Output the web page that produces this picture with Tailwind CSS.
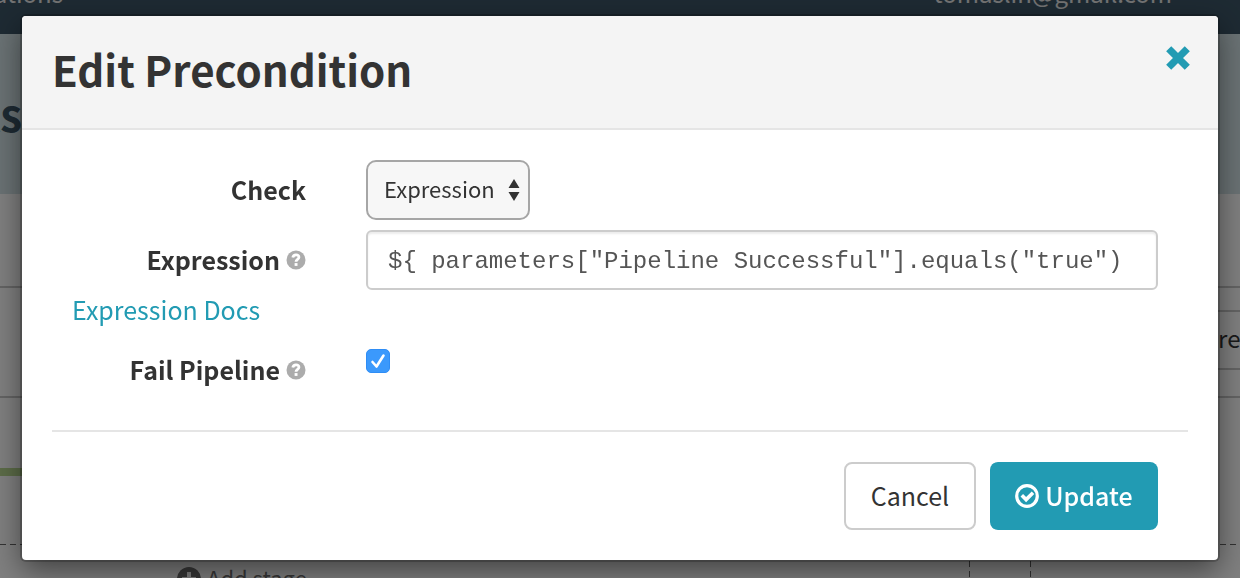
<!DOCTYPE html>
<html lang="en">
<head>
<meta charset="utf-8">
<meta name="viewport" content="width=device-width, initial-scale=1">
<title>Edit Precondition</title>
<script src="https://cdn.jsdelivr.net/npm/@tailwindcss/browser@4"></script>
</head>
<body class="h-screen overflow-hidden bg-white font-['Noto_Sans_CJK_SC','Noto_Sans',sans-serif] text-[#333333]">

<!-- Page behind the dialog -->
<div class="h-screen overflow-hidden" inert>
  <nav class="flex h-[34px] items-start justify-between overflow-hidden bg-[#3c5566] pr-[68px] text-[24px] leading-[34px] text-[#e6e6e6]">
    <span class="-mt-[24px] -ml-[76px]">Applications</span>
    <span class="-mt-[24px]">tomaslin@gmail.com</span>
  </nav>
  <header class="flex h-[160px] items-center bg-[#d4e4e8]">
    <h1 class="flex w-[22px] justify-end pb-[2px] text-[44px] leading-[60px] font-bold text-[#3c5566]">clients</h1>
  </header>
  <div class="mt-[92px] flex h-[112px] items-start justify-end overflow-hidden border-y-2 border-[#c8c8c8] pt-[22px]">
    <div class="-mr-[80px] flex h-[60px] w-[150px] items-center justify-center border-2 border-[#c8c8c8] pr-[12px] pb-1 text-[24px] text-[#333333]">Create</div>
  </div>
  <div class="mt-[70px] h-2 w-1/2 bg-[#b8d890]"></div>
  <div class="mt-[68px] h-px bg-[repeating-linear-gradient(90deg,#666666_0_6px,transparent_6px_10px)]"></div>
  <div class="flex h-10 justify-between pt-4">
    <div class="flex gap-[6px] pl-[177px] text-[22px] leading-8 text-[#707070]">
      <svg class="mt-[6px] size-6" viewBox="0 0 24 24" aria-hidden="true"><circle cx="12" cy="12" r="12" fill="currentColor"/><path d="M12 5v14M5 12h14" stroke="#fff" stroke-width="4"/></svg>
      Add stage
    </div>
    <div class="mr-[209px] flex w-[62px] justify-between">
      <div class="w-px bg-[repeating-linear-gradient(180deg,#666666_0_6px,transparent_6px_10px)]"></div>
      <div class="w-px bg-[repeating-linear-gradient(180deg,#666666_0_6px,transparent_6px_10px)]"></div>
    </div>
  </div>
</div>

<!-- Dialog -->
<div class="fixed inset-0 bg-black/50 px-[22px] pt-4">
  <section role="dialog" aria-modal="true" aria-labelledby="dialog-title" class="overflow-hidden rounded-sm bg-white shadow-[0_10px_30px_rgba(0,0,0,0.5),0_0_0_2px_rgba(0,0,0,0.2)]">
    <header class="flex items-start justify-between border-b-2 border-[#e5e5e5] bg-[#f4f4f4] px-[30px]">
      <h2 id="dialog-title" class="pb-[6px] text-[42px] leading-[106px] font-bold">Edit Precondition</h2>
      <button type="button" aria-label="Close" class="-mr-[2px] mt-[30px] text-[#229bb3]">
        <svg class="size-6" viewBox="0 0 24 24" fill="none" stroke="currentColor" stroke-width="7.2" aria-hidden="true"><path d="M2.7 2.7l18.6 18.6M21.3 2.7L2.7 21.3"/></svg>
      </button>
    </header>

    <form class="px-[30px] py-[30px]">
      <div class="grid grid-cols-[254px_1fr] gap-x-[60px] pr-[30px] pb-[30px]">
        <label for="check" class="pb-[2px] text-right text-[25px] leading-[58px] font-bold">Check</label>
        <div class="relative w-[164px]">
          <select id="check" class="h-[60px] w-full appearance-none rounded-[10px] border-2 border-[#a6a6a6] bg-[#f7f7f7] pb-1 pl-4 text-[22px]">
            <option>Expression</option>
          </select>
          <svg class="pointer-events-none absolute top-[19px] right-[10px] h-[22px] w-3" viewBox="0 0 12 22" fill="#333" aria-hidden="true"><path d="M6 0l5.500 9H.5zM6 22L.5 13h11z"/></svg>
        </div>

        <div class="mt-[10px] flex items-center justify-end gap-[6px]">
          <label for="expression" class="pb-[2px] text-[25px] leading-[58px] font-bold">Expression</label>
          <svg class="size-5" viewBox="0 0 20 20" aria-hidden="true"><circle cx="10" cy="10" r="9.500" fill="#acacac"/><path d="M6.800 7.500C7.500 3.700 13.200 4.200 12.900 7.400C12.700 9.400 10 9.300 10 11.700" fill="none" stroke="#fff" stroke-width="2.800"/><path d="M8.600 13.100h2.900v2.800H8.600z" fill="#fff"/></svg>
        </div>
        <input id="expression" type="text" value='${ parameters["Pipeline Successful"].equals("true")' class="mt-[10px] h-[60px] w-full rounded-md border-2 border-[#cccccc] px-5 pt-[2px] font-['Liberation_Mono',monospace] text-[24px] text-[#555555] shadow-[inset_0_2px_2px_rgba(0,0,0,0.08)]">

        <div class="col-span-2 pb-[2px] pl-5 text-[25px] leading-[38px]">
          <a href="#" class="text-[#229bb3]">Expression Docs</a>
        </div>

        <div class="mt-[10px] flex items-center justify-end gap-[6px]">
          <label for="fail" class="pb-[2px] text-[25px] leading-[58px] font-bold">Fail Pipeline</label>
          <svg class="size-5" viewBox="0 0 20 20" aria-hidden="true"><circle cx="10" cy="10" r="9.500" fill="#acacac"/><path d="M6.800 7.500C7.500 3.700 13.200 4.200 12.900 7.400C12.700 9.400 10 9.300 10 11.700" fill="none" stroke="#fff" stroke-width="2.800"/><path d="M8.600 13.100h2.900v2.800H8.600z" fill="#fff"/></svg>
        </div>
        <div class="relative mt-[19px] size-6">
          <input id="fail" type="checkbox" checked class="block size-6 appearance-none rounded-[5px] border border-[#2f8df5] bg-white checked:bg-[#3b99fc]">
          <svg class="pointer-events-none absolute inset-0 size-6" viewBox="0 0 24 24" fill="none" stroke="#fff" stroke-width="2.600" stroke-linecap="round" stroke-linejoin="round" aria-hidden="true"><path d="M6.500 13l4 4.500L17.500 6.500"/></svg>
        </div>
      </div>

      <div class="flex justify-end gap-[14px] border-t-2 border-[#e5e5e5] pt-[30px] pr-[30px]">
        <button type="button" class="h-[68px] w-[132px] rounded-lg border-2 border-[#cccccc] bg-white text-[25px]">Cancel</button>
        <button type="submit" class="flex h-[68px] w-[168px] items-center justify-center gap-[6px] rounded-lg bg-[#229bb3] text-[25px] font-medium text-white">
          <svg class="size-6" viewBox="0 0 24 24" fill="none" stroke="currentColor" aria-hidden="true"><circle cx="12" cy="12" r="10.300" stroke-width="3.200"/><path d="M6.800 11.300l4.300 4.300 6.900-6.900" stroke-width="3.600"/></svg>
          Update
        </button>
      </div>
    </form>
  </section>
</div>
</body>
</html>
